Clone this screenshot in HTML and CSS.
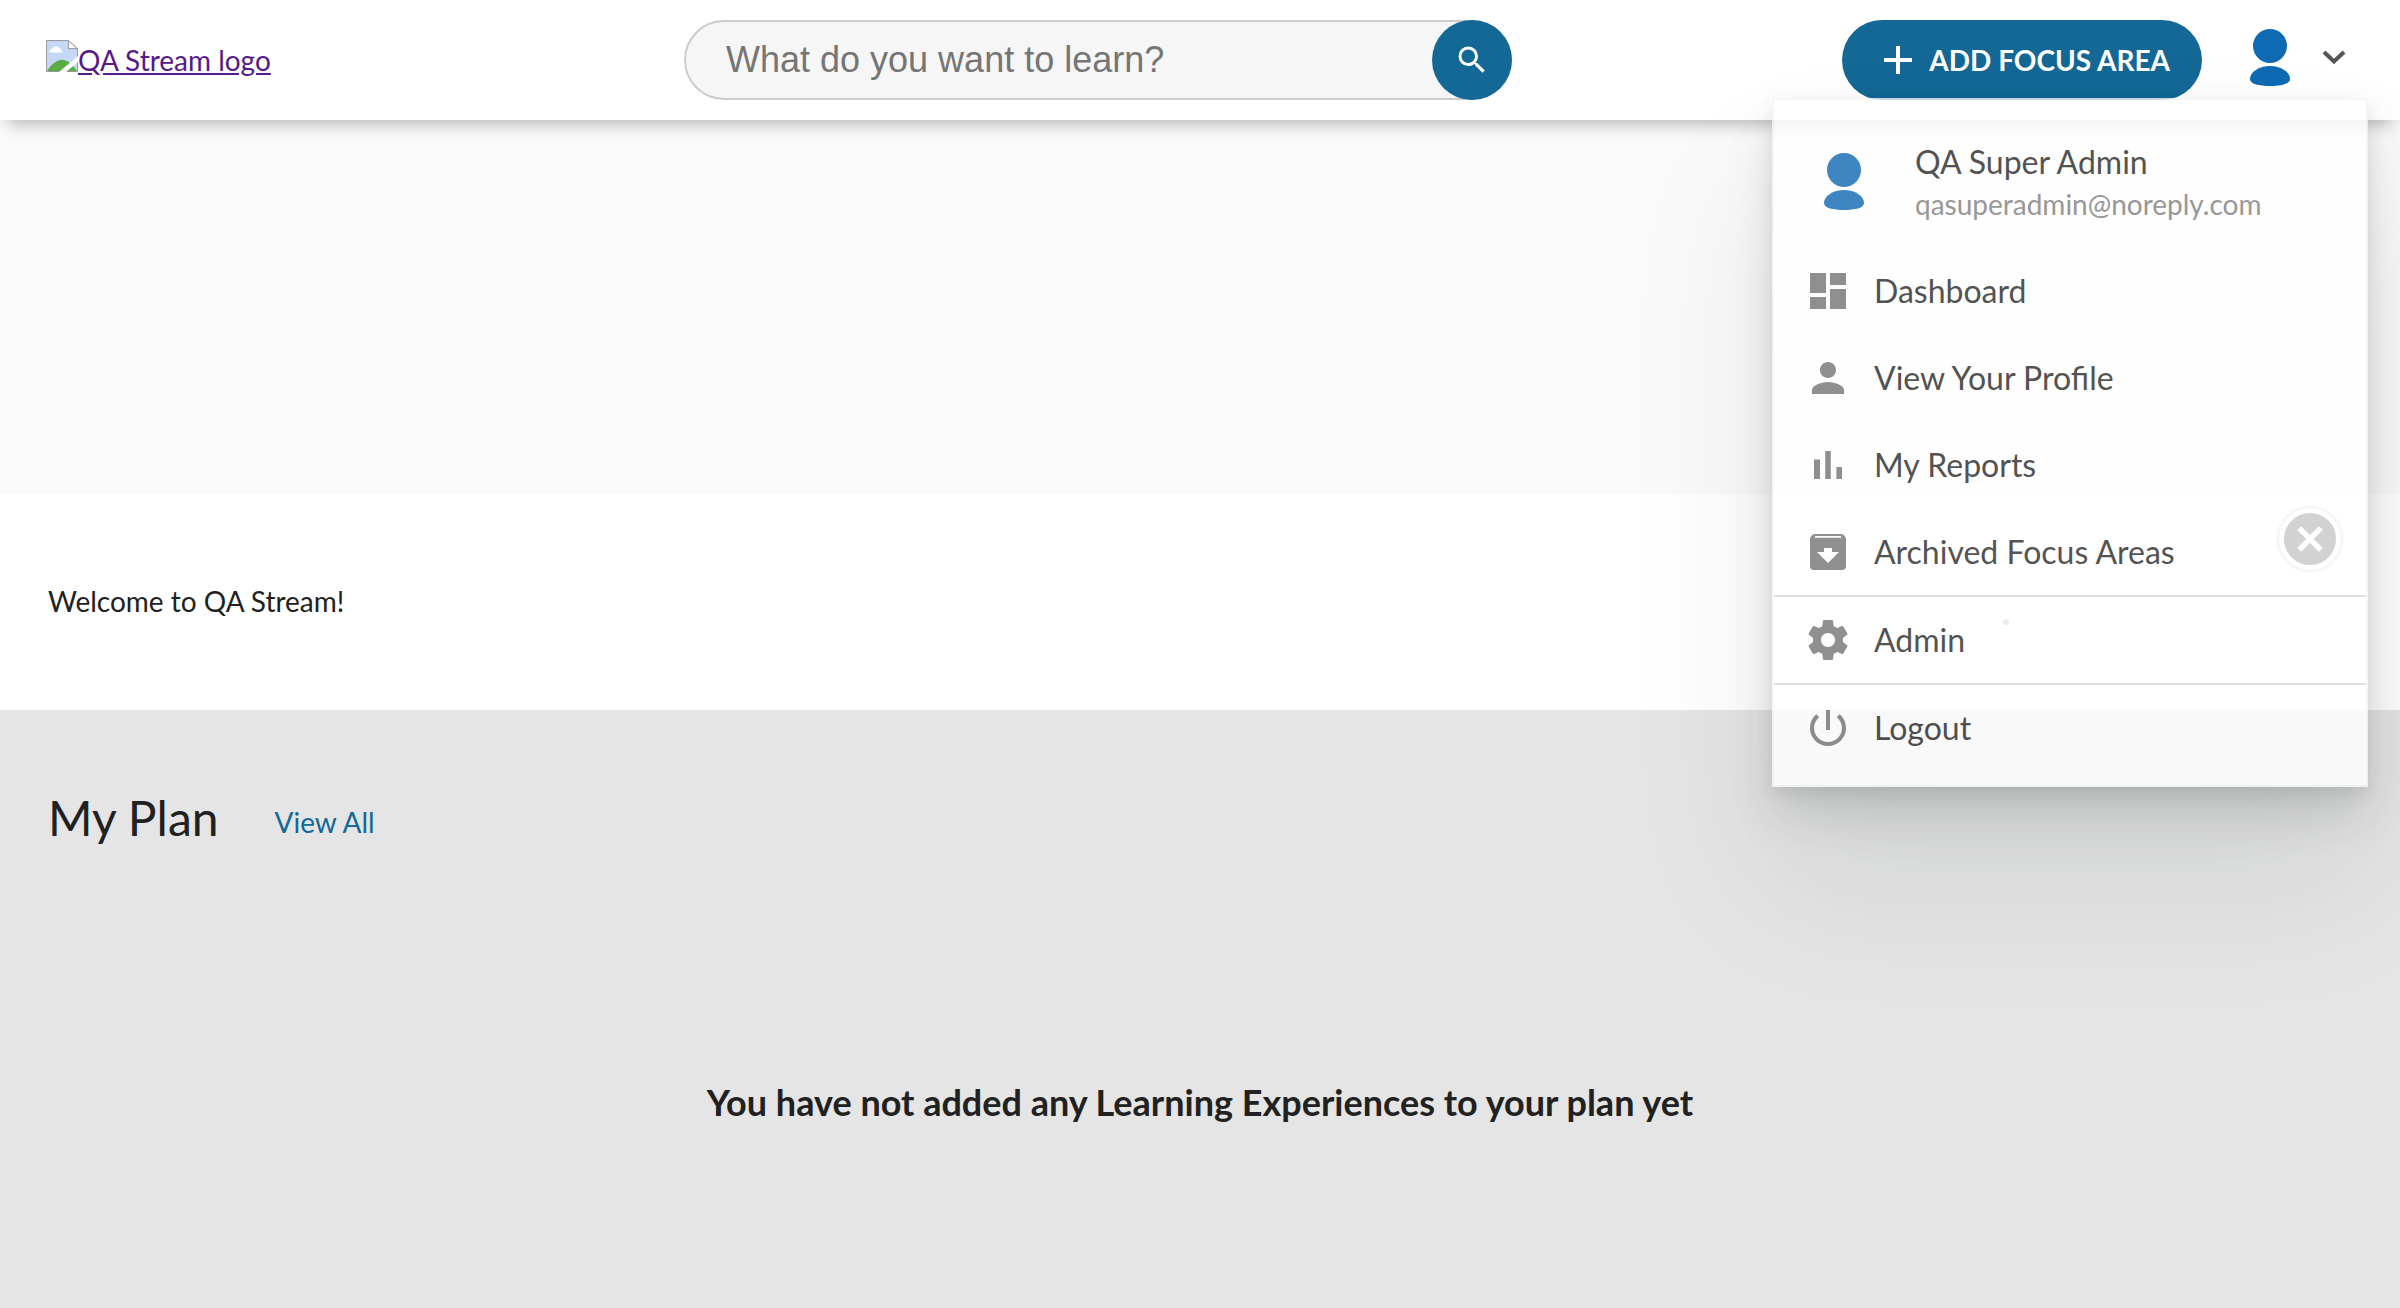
FILE: index.html
```html
<!DOCTYPE html>
<html lang="en">
<head>
<meta charset="utf-8">
<title>QA Stream</title>
<meta name="viewport" content="width=device-width, initial-scale=1">
<link rel="stylesheet" href="styles.css">
</head>
<body>
<svg class="sprite" aria-hidden="true">
  <symbol id="avatar" viewBox="0 0 40 58">
    <ellipse cx="20" cy="17" rx="17" ry="17"/>
    <path d="M20 37C31 37 40 43 40 50C40 55 31 57 20 57C9 57 0 55 0 50C0 43 9 37 20 37Z"/>
  </symbol>
</svg>
<header class="topbar">
  <a class="logo" href="#">
    <svg class="logo-image" viewBox="0 0 16 16" aria-hidden="true">
      <path d="M0.25 0.25H11.2L15.75 4.3V15.75H0.25Z" fill="#c6d8f5" stroke="#9a9a9a" stroke-width=".5"/>
      <path d="M2 6.2C1.2 5.4 2.2 4.5 3 4.7C3.3 2.8 6 2.5 6.5 4.1C7.8 4.3 8.4 5.5 7.7 6.3Z" fill="#fff"/>
      <path d="M.6 15.5C3 11.5 6 9.8 8 9.9C11 10 13.5 12.5 15.4 15.5Z" fill="#5aac44"/>
      <path d="M6.5 16L16 8V11L10 16Z" fill="#fff"/>
      <path d="M11.2.3V4.3H15.7Z" fill="#fff" stroke="#9a9a9a" stroke-width=".5"/>
    </svg><span class="logo-text">QA Stream logo</span>
  </a>
  <form class="search" role="search">
    <input class="search-input" type="search" placeholder="What do you want to learn?" aria-label="What do you want to learn?">
    <button class="search-button" type="button" aria-label="Search">
      <svg viewBox="0 0 24 24"><path d="M15.5 14h-.79l-.28-.27A6.47 6.47 0 0 0 16 9.5 6.5 6.5 0 1 0 9.5 16c1.61 0 3.09-.59 4.23-1.57l.27.28v.79l5 4.99L20.49 19l-4.99-5zm-6 0C7.01 14 5 11.99 5 9.5S7.01 5 9.5 5 14 7.01 14 9.5 11.99 14 9.5 14z"/></svg>
    </button>
  </form>
  <div class="actions">
    <button class="add-button" type="button">
      <svg viewBox="0 0 28 28" aria-hidden="true"><path d="M12 0h4v12h12v4H16v12h-4V16H0v-4h12z"/></svg>
      <span>ADD FOCUS AREA</span>
    </button>
    <button class="account" type="button" aria-label="Account menu" aria-expanded="true">
      <svg class="avatar"><use href="#avatar"/></svg>
      <svg class="chevron" viewBox="0 0 24 14"><path d="M2 2L12 11.500L22 2"/></svg>
    </button>
  </div>
  <nav class="menu" aria-label="Account">
    <div class="profile">
      <svg class="avatar"><use href="#avatar"/></svg>
      <div class="profile-text">
        <div class="profile-name">QA Super Admin</div>
        <div class="profile-email">qasuperadmin@noreply.com</div>
      </div>
    </div>
    <a class="menu-item" href="#"><svg viewBox="0 0 24 24"><path d="M3 13h8V3H3v10zm0 8h8v-6H3v6zm10 0h8V11h-8v10zm0-18v6h8V3h-8z"/></svg>Dashboard</a>
    <a class="menu-item" href="#"><svg viewBox="0 0 24 24"><path d="M12 12c2.210 0 4-1.790 4-4s-1.790-4-4-4-4 1.790-4 4 1.790 4 4 4zm0 2c-2.670 0-8 1.340-8 4v2h16v-2c0-2.660-5.330-4-8-4z"/></svg>View Your Profile</a>
    <a class="menu-item" href="#"><svg viewBox="0 0 24 24"><path d="M5 9.200h3V19H5zM10.600 5h2.800v14h-2.800zm5.600 8H19v6h-2.800z"/></svg>My Reports</a>
    <a class="menu-item" href="#"><svg viewBox="0 0 24 24"><path fill-rule="evenodd" d="M20 3.600Q19.500 3 18.500 3h-13Q4.500 3 4 3.600L3.200 4.700Q3 5 3 5.500V19a2 2 0 0 0 2 2h14a2 2 0 0 0 2-2V5.500Q21 5 20.800 4.700zM5.200 4.900L5.700 4h12.600l.5.900zM12 17.500L6.500 12H10v-2h4v2h3.500z"/></svg>Archived Focus Areas</a>
    <a class="menu-item divided" href="#"><svg viewBox="0 0 24 24"><path d="M19.430 12.980c.04-.32.07-.64.07-.98s-.03-.66-.07-.98l2.110-1.650c.19-.15.24-.42.12-.64l-2-3.460c-.12-.22-.39-.3-.61-.22l-2.490 1c-.52-.4-1.080-.73-1.690-.98l-.38-2.650C14.460 2.180 14.250 2 14 2h-4c-.25 0-.46.18-.49.42l-.38 2.650c-.61.25-1.170.59-1.690.98l-2.490-1c-.23-.09-.49 0-.61.22l-2 3.460c-.13.22-.07.49.12.64l2.110 1.650c-.04.32-.07.65-.07.98s.03.66.07.98l-2.110 1.650c-.19.15-.24.42-.12.64l2 3.460c.12.22.39.3.61.22l2.490-1c.52.4 1.080.73 1.690.98l.38 2.650c.03.24.24.42.49.42h4c.25 0 .46-.18.49-.42l.38-2.650c.61-.25 1.170-.59 1.690-.98l2.490 1c.23.09.49 0 .61-.22l2-3.460c.12-.22.07-.49-.12-.64l-2.110-1.650zM12 15.500c-1.930 0-3.500-1.570-3.500-3.500s1.570-3.500 3.500-3.500 3.500 1.570 3.500 3.500-1.570 3.500-3.500 3.500z"/></svg>Admin</a>
    <a class="menu-item divided" href="#"><svg viewBox="0 0 24 24"><path d="M13 3h-2v10h2V3zm4.830 2.170l-1.420 1.420C17.990 7.860 19 9.810 19 12c0 3.870-3.130 7-7 7s-7-3.130-7-7c0-2.190 1.010-4.140 2.580-5.420L6.170 5.170C4.230 6.820 3 9.260 3 12c0 4.970 4.030 9 9 9s9-4.030 9-9c0-2.740-1.230-5.180-3.170-6.830z"/></svg>Logout</a>
    <button class="close" type="button" aria-label="Close">
      <svg viewBox="0 0 24 24"><path d="M2 2L22 22M22 2L2 22"/></svg>
    </button>
    <span class="dot"></span>
  </nav>
</header>
<main>
  <div class="hero"></div>
  <section class="welcome"><p>Welcome to QA Stream!</p></section>
  <section class="plan">
    <div class="plan-head">
      <h2>My Plan</h2>
      <a href="#">View All</a>
    </div>
    <p class="empty">You have not added any Learning Experiences to your plan yet</p>
  </section>
</main>
</body>
</html>
```
FILE: styles.css
```css
* { box-sizing: border-box; }
body {
  margin: 0;
  min-height: 100vh;
  display: flex;
  flex-direction: column;
  font-family: Lato, sans-serif;
  font-size: 28px;
  line-height: 40px;
  color: #212121;
  background: #fff;
}
p, h2 { margin: 0; }
button { border: 0; padding: 0; font: inherit; cursor: pointer; }
.sprite { display: none; }

.topbar {
  position: relative;
  z-index: 1;
  display: grid;
  grid-template-columns: 638fr 828fr 842fr;
  align-items: center;
  height: 120px;
  padding: 0 46px;
  background: #fff;
  box-shadow: 0 12px 16px -8px rgba(0, 0, 0, .28);
}
.logo { display: flex; align-items: center; color: #551a8b; }
.logo-image { width: 32px; height: 32px; margin-bottom: 8px; }

.search { position: relative; display: flex; }
.search-input {
  flex: 1;
  min-width: 0;
  height: 80px;
  padding: 0 96px 0 40px;
  border: 2px solid #ccc;
  border-radius: 40px;
  background: #f6f6f6;
  font: 36px "Liberation Sans", sans-serif;
  appearance: none;
}
.search-input::placeholder { color: #757575; opacity: 1; }
.search-button {
  position: absolute;
  right: 0;
  top: 0;
  display: grid;
  place-items: center;
  width: 80px;
  height: 80px;
  border-radius: 50%;
  background: #136896;
}
.search-button svg { width: 36px; fill: #fff; }

.actions { display: flex; justify-content: flex-end; align-items: center; gap: 48px; }
.add-button {
  display: flex;
  align-items: center;
  gap: 17px;
  height: 80px;
  padding: 0 32px 0 42px;
  border-radius: 40px;
  background: #136896;
  color: #fff;
  font-weight: 700;
}
.add-button svg { width: 28px; height: 28px; fill: #fff; }
.account { display: flex; align-items: center; gap: 32px; padding: 0 8px 4px 0; background: none; }
.avatar { width: 40px; height: 58px; fill: #0f6ab4; }
.chevron { width: 24px; height: 14px; margin-bottom: 2px; fill: none; stroke: #555; stroke-width: 4; }

.menu {
  position: absolute;
  top: 98px;
  right: 32px;
  width: 596px;
  padding-bottom: 14px;
  border: 2px solid #f4f4f4;
  background: #fff;
  opacity: .8;
  box-shadow:
    0 8px 16px rgba(0, 20, 20, .1),
    0 28px 44px rgba(0, 20, 20, .14),
    0 90px 140px rgba(0, 20, 20, .1);
}
.profile { display: flex; align-items: center; gap: 51px; height: 147px; padding: 32px 0 16px 50px; }
.profile-name { font-size: 32px; line-height: 44px; color: #292929; }
.profile-email { color: #808080; }
.menu-item {
  display: flex;
  align-items: center;
  gap: 22px;
  height: 87px;
  padding-left: 30px;
  font-size: 32px;
  color: #292929;
  text-decoration: none;
}
.menu-item svg { width: 48px; height: 48px; fill: #757575; }
.divided { height: 88px; border-top: 2px solid #d8d8d8; }
.close {
  position: absolute;
  top: 408px;
  right: 25px;
  display: grid;
  place-items: center;
  width: 62px;
  height: 62px;
  border: 5px solid #fff;
  border-radius: 50%;
  background: #c8c8c8;
  box-shadow: 0 0 4px rgba(0, 0, 0, .16);
}
.close svg { width: 26px; height: 26px; fill: none; stroke: #fff; stroke-width: 5; }
.dot { position: absolute; top: 519px; left: 229px; width: 6px; height: 6px; border-radius: 50%; background: #e8e8e8; }

main { flex: 1; display: flex; flex-direction: column; }
.hero { height: 374px; background: #fafafa; }
.welcome { padding: 87px 48px 89px; }
.plan { flex: 1; padding: 76px 48px; background: #e5e5e5; }
.plan-head { display: flex; align-items: flex-end; gap: 56px; }
.plan-head h2 { font-size: 48px; line-height: 64px; font-weight: 400; }
.plan-head a { padding-bottom: 8px; color: #136896; text-decoration: none; }
.empty { margin-top: 230px; text-align: center; font-size: 36px; font-weight: 700; line-height: 44px; }
```
